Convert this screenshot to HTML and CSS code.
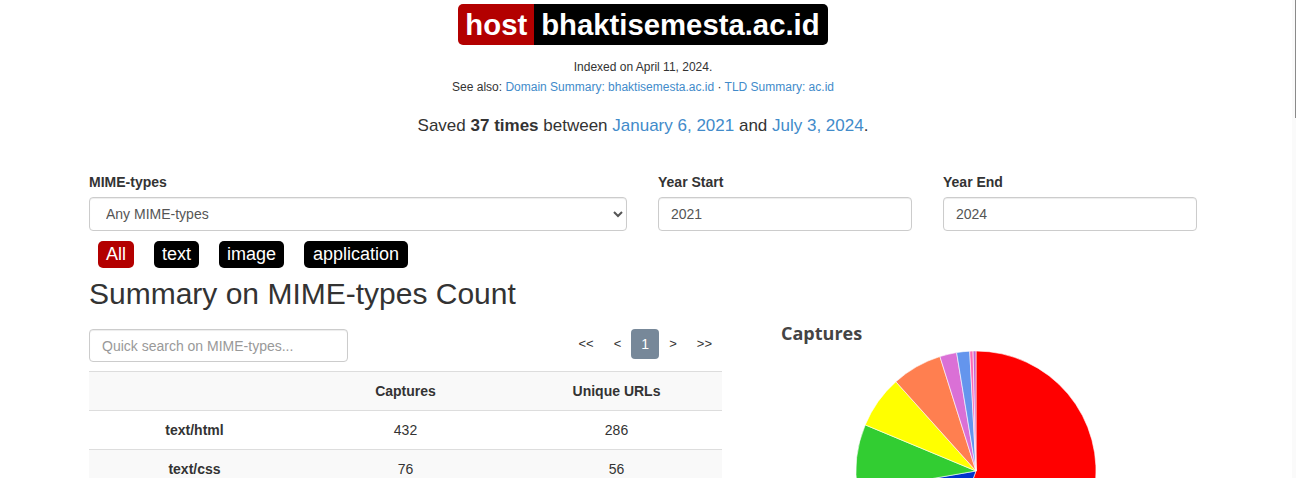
FILE: index.html
```html
<!DOCTYPE html>
<html>
<head>
<meta charset="utf-8">
<link rel="stylesheet" href="styles.css">
</head>
<body>
<div class="top">
  <div class="badge"><span class="b-host">host</span><span class="b-name">bhaktisemesta.ac.id</span></div>
  <p class="small">Indexed on April 11, 2024.</p>
  <p class="small">See also: <a href="#">Domain Summary: bhaktisemesta.ac.id</a> · <a href="#">TLD Summary: ac.id</a></p>
  <p class="saved">Saved <b>37 times</b> between <a href="#">January 6, 2021</a> and <a href="#">July 3, 2024</a>.</p>
</div>
<div class="main">
  <div class="filters">
    <div class="fgroup mime">
      <label>MIME-types</label>
      <select class="control"><option>Any MIME-types</option></select>
    </div>
    <div class="fgroup year">
      <label>Year Start</label>
      <input class="control" type="text" value="2021">
    </div>
    <div class="fgroup year">
      <label>Year End</label>
      <input class="control" type="text" value="2024">
    </div>
  </div>
  <div class="pills">
    <span class="pill active">All</span>
    <span class="pill">text</span>
    <span class="pill">image</span>
    <span class="pill wide">application</span>
  </div>
  <h2 class="heading">Summary on MIME-types Count</h2>
  <div class="content">
    <div class="left">
      <div class="toolbar">
        <input class="control search" type="text" placeholder="Quick search on MIME-types...">
        <div class="pager">
          <span class="pg">&lt;&lt;</span>
          <span class="pg">&lt;</span>
          <span class="pg current">1</span>
          <span class="pg">&gt;</span>
          <span class="pg">&gt;&gt;</span>
        </div>
      </div>
      <table class="tbl">
        <tr class="odd"><th></th><th>Captures</th><th>Unique URLs</th></tr>
        <tr><th>text/html</th><td>432</td><td>286</td></tr>
        <tr class="odd"><th>text/css</th><td>76</td><td>56</td></tr>
      </table>
    </div>
    <div class="right">
      <div class="chart-title">Captures</div>
      <div class="pie-wrap">
        <svg class="pie" width="240" height="240" viewBox="0 0 240 240">
          <g stroke="#fff" stroke-width="0.6" stroke-linejoin="round">
            <path fill="#ff0000" d="M120 120 L120 0 A120 120 0 1 1 78.96 232.76 Z"/>
            <path fill="#0033cc" d="M120 120 L78.96 232.76 A120 120 0 0 1 1.75 140.43 Z"/>
            <path fill="#32cd32" d="M120 120 L1.75 140.43 A120 120 0 0 1 9.22 73.88 Z"/>
            <path fill="#ffff00" d="M120 120 L9.22 73.88 A120 120 0 0 1 39.86 30.68 Z"/>
            <path fill="#ff7f50" d="M120 120 L39.86 30.68 A120 120 0 0 1 83.92 5.56 Z"/>
            <path fill="#da70d6" d="M120 120 L83.92 5.56 A120 120 0 0 1 100.61 1.57 Z"/>
            <path fill="#6495ed" d="M120 120 L100.61 1.57 A120 120 0 0 1 113.72 0.16 Z"/>
            <path fill="#ff69b4" d="M120 120 L113.72 0.16 A120 120 0 0 1 117.07 0.04 Z"/>
            <path fill="#c964cf" d="M120 120 L117.07 0.04 A120 120 0 0 1 120 0 Z"/>
          </g>
        </svg>
      </div>
    </div>
  </div>
</div>
<div class="scroll-track"><div class="scroll-thumb"></div></div>
</body>
</html>
```
FILE: styles.css
```css
* { box-sizing: border-box; }
html, body { margin: 0; padding: 0; background: #fff; }
body {
  font-family: "Liberation Sans", Arial, sans-serif;
  font-size: 14px;
  line-height: 20px;
  color: #333;
  overflow: hidden;
  padding-right: 10px;
}
a { color: #428bca; text-decoration: none; }

.top { text-align: center; padding-top: 4px; }
.badge {
  display: inline-flex;
  font-weight: bold;
  font-size: 29.3px;
  line-height: 41px;
  height: 41px;
  color: #fff;
}
.b-host { background: #b30000; padding: 0 7px; border-radius: 5px 0 0 5px; }
.b-name { background: #000; padding: 0 8px 0 7px; border-radius: 0 5px 5px 0; }
.small { margin: 0; font-size: 12px; line-height: 20px; }
.badge + .small { margin-top: 12px; }
.saved { margin: 18px 0 0; font-size: 17px; line-height: 22px; }

.main { width: 1108px; margin: 0 auto; }
.filters { display: flex; gap: 31px; margin-top: 35px; }
.fgroup { display: flex; flex-direction: column; }
.fgroup.mime { width: 538px; }
.fgroup.year { width: 254px; }
label { font-weight: bold; font-size: 14px; line-height: 20px; margin-bottom: 5px; }
.control {
  height: 34px;
  border: 1px solid #ccc;
  border-radius: 4px;
  background: #fff;
  font-family: "Liberation Sans", Arial, sans-serif;
  font-size: 14px;
  color: #555;
  padding: 6px 12px;
  box-shadow: inset 0 1px 1px rgba(0,0,0,0.075);
  outline: none;
}
select.control { padding-left: 12px; }

.pills { display: flex; gap: 20px; padding-left: 9px; margin-top: 10px; }
.pill {
  background: #000;
  color: #fff;
  font-size: 18px;
  line-height: 27px;
  height: 27px;
  padding: 0 8px;
  border-radius: 5px;
}
.pill.wide { padding: 0 9px; }
.pill.active { background: #b30000; }

.heading {
  font-size: 30px;
  font-weight: normal;
  line-height: 33px;
  margin: 9px 0 0;
  color: #333;
}

.content { display: flex; gap: 32px; }
.left { width: 633px; margin-top: 19px; }
.toolbar { display: flex; justify-content: space-between; align-items: flex-start; }
.search { width: 259px; height: 33px; }
.search::placeholder { color: #999; }
.pager { display: flex; align-items: center; height: 30px; }
.pg { font-size: 13px; line-height: 30px; padding: 0 10px; color: #333; }
.pg.current {
  background: #778899;
  color: #fff;
  border-radius: 4px;
  font-size: 14px;
  width: 28px;
  text-align: center;
  padding: 0;
}
.tbl {
  width: 100%;
  border-collapse: collapse;
  margin-top: 9px;
  table-layout: fixed;
}
.tbl th, .tbl td {
  border-top: 1px solid #ddd;
  padding: 9px 8px;
  text-align: center;
  line-height: 20px;
  font-size: 14px;
}
.tbl tr.odd { background: #f9f9f9; }

.right { width: 443px; margin-top: 11px; }
.chart-title {
  font-family: "Open Sans", "Noto Sans", sans-serif;
  font-weight: bold;
  font-size: 18px;
  line-height: 24px;
  color: #444;
  padding-left: 27px;
}
.pie-wrap { display: flex; justify-content: center; margin-top: 6px; }
.pie { display: block; }

.scroll-track {
  position: fixed; top: 0; right: 0; width: 4px; height: 100%;
  background: #fafafa;
}
.scroll-thumb { position: absolute; right: 0; top: 0; width: 1px; height: 118px; background: #8a8a8a; }
```
